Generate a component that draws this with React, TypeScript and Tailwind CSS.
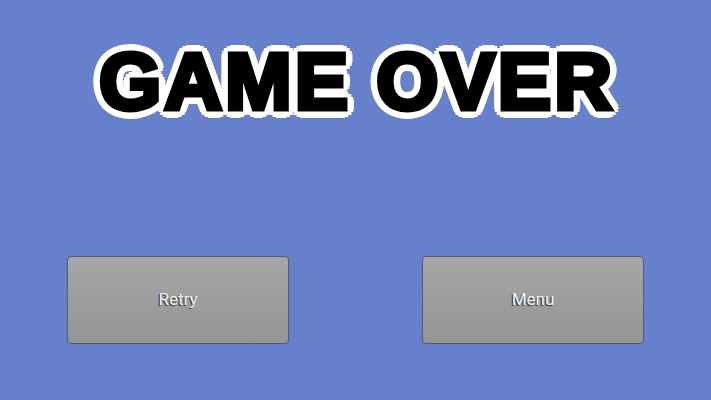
import React from "react";

const GameButton: React.FC<{ label: string }> = ({ label }) => (
  <button className="w-[222px] h-[88px] rounded-[4px] border border-[#4f5a78] bg-gradient-to-b from-[#a6a6a6] to-[#959595] text-[17px] text-[#f4f4f4] font-['Roboto',sans-serif] [text-shadow:-1px_1px_1px_#2a2a2a]">
    {label}
  </button>
);

export default function App() {
  return (
    <div className="w-[711px] h-[400px] bg-[#6680cc] flex flex-col overflow-hidden">
      {/* Title: black fill, thickened, round white outline from shadows */}
      <div className="h-[164px] flex items-center justify-center pl-[3px]">
        <h1 className="text-[80px] leading-none font-bold tracking-[3px] text-black font-['Liberation_Sans',Arial,sans-serif] [-webkit-text-stroke:5px_black] [text-shadow:9px_0_0_#fff,8.3px_3.4px_0_#fff,6.4px_6.4px_0_#fff,3.4px_8.3px_0_#fff,0_9px_0_#fff,-3.4px_8.3px_0_#fff,-6.4px_6.4px_0_#fff,-8.3px_3.4px_0_#fff,-9px_0_0_#fff,-8.3px_-3.4px_0_#fff,-6.4px_-6.4px_0_#fff,-3.4px_-8.3px_0_#fff,0_-9px_0_#fff,3.4px_-8.3px_0_#fff,6.4px_-6.4px_0_#fff,8.3px_-3.4px_0_#fff,5px_0_0_#fff,3.5px_3.5px_0_#fff,0_5px_0_#fff,-3.5px_3.5px_0_#fff,-5px_0_0_#fff,-3.5px_-3.5px_0_#fff,0_-5px_0_#fff,3.5px_-3.5px_0_#fff]">
          GAME OVER
        </h1>
      </div>

      {/* Buttons */}
      <div className="flex justify-between px-[67px] mt-[92px]">
        <GameButton label="Retry" />
        <GameButton label="Menu" />
      </div>
    </div>
  );
}
